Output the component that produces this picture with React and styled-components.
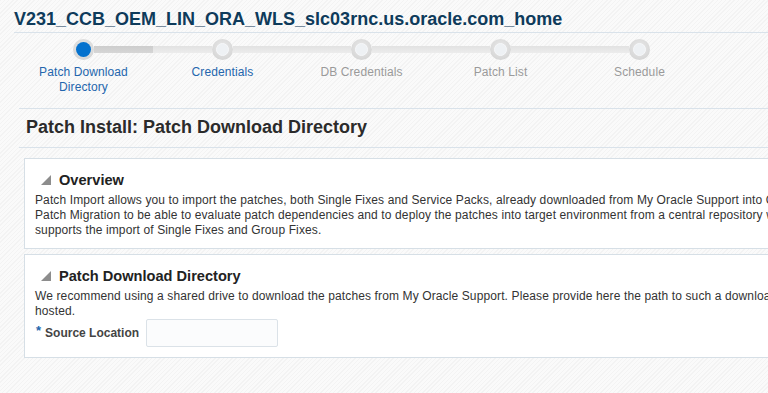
import React from 'react';
import styled, { createGlobalStyle } from 'styled-components';

const GlobalStyle = createGlobalStyle`
  html, body {
    margin: 0;
    padding: 0;
    overflow: hidden;
  }
  body {
    font-family: "Liberation Sans", Arial, sans-serif;
    background: repeating-linear-gradient(135deg, #f3f3f3 0 1px, #fafafa 1px 3px);
  }
`;

const steps = [
  { label: 'Patch Download Directory', state: 'current', lines: ['Patch Download', 'Directory'] },
  { label: 'Credentials', state: 'next', lines: ['Credentials'] },
  { label: 'DB Credentials', state: 'todo', lines: ['DB Credentials'] },
  { label: 'Patch List', state: 'todo', lines: ['Patch List'] },
  { label: 'Schedule', state: 'todo', lines: ['Schedule'] },
];

const App = () => {
  return (
    <Page>
      <GlobalStyle />
      <Header>
        <Title>V231_CCB_OEM_LIN_ORA_WLS_slc03rnc.us.oracle.com_home</Title>
      </Header>

      <Train>
        {steps.map((s, i) => (
          <Step key={s.label}>
            <Track>
              <Half $off={i === 0} />
              <Stop>
                <Dot $state={s.state} />
              </Stop>
              <Half $off={i === steps.length - 1} $dark={i === 0} />
            </Track>
            <StepLabel $state={s.state}>
              {s.lines.map(l => (
                <div key={l}>{l}</div>
              ))}
            </StepLabel>
          </Step>
        ))}
      </Train>

      <PageHeading>
        <h2>Patch Install: Patch Download Directory</h2>
      </PageHeading>

      <Panels>
        <Panel>
          <PanelHead>
            <Disclosure />
            <PanelTitle>Overview</PanelTitle>
          </PanelHead>
          <Body>
            <Line>Patch Import allows you to import the patches, both Single Fixes and Service Packs, already downloaded from My Oracle Support into Oracle Enterprise Manager Software Library so that</Line>
            <Line>Patch Migration to be able to evaluate patch dependencies and to deploy the patches into target environment from a central repository which</Line>
            <Line>supports the import of Single Fixes and Group Fixes.</Line>
          </Body>
        </Panel>

        <Panel>
          <PanelHead>
            <Disclosure />
            <PanelTitle>Patch Download Directory</PanelTitle>
          </PanelHead>
          <Body>
            <Line>We recommend using a shared drive to download the patches from My Oracle Support. Please provide here the path to such a download directory where the patches are</Line>
            <Line>hosted.</Line>
          </Body>
          <FieldRow>
            <Required>*</Required>
            <FieldLabel htmlFor="src">Source Location</FieldLabel>
            <TextInput id="src" type="text" />
          </FieldRow>
        </Panel>
      </Panels>
    </Page>
  );
};

export default App;

const Page = styled.div`
  width: 768px;
  height: 393px;
  overflow: hidden;
`;

const Header = styled.div`
  margin-left: 14px;
  border-bottom: 1px solid #d9e2ea;
  height: 32px;
`;

const Title = styled.h1`
  margin: 0;
  padding-top: 9px;
  font-size: 18px;
  line-height: 20px;
  font-weight: bold;
  color: #0e3b5b;
  white-space: nowrap;
`;

const Train = styled.div`
  display: flex;
  margin-left: 19px;
  height: 75px;
  border-bottom: 1px solid #d9e2ea;
  & > div:first-child {
    margin-left: -5px;
  }
`;

const Step = styled.div`
  width: 139px;
  display: flex;
  flex-direction: column;
  align-items: stretch;
`;

const Track = styled.div`
  display: flex;
  align-items: center;
  margin-top: 6px;
  height: 21px;
`;

const Half = styled.div`
  flex: 1;
  height: 7px;
  visibility: ${p => (p.$off ? 'hidden' : 'visible')};
  background: ${p => (p.$dark
    ? 'linear-gradient(#cdcdcd, #d6d6d6)'
    : 'linear-gradient(#e2e2e2, #ececec)')};
`;

const Stop = styled.div`
  width: 21px;
  height: 21px;
  border-radius: 50%;
  background: radial-gradient(circle at 50% 40%, #e9e9e9 0%, #dadada 60%, #cfcfcf 100%);
  display: flex;
  align-items: center;
  justify-content: center;
  flex-shrink: 0;
`;

const Dot = styled.div`
  width: ${p => (p.$state === 'current' ? '15px' : '13px')};
  height: ${p => (p.$state === 'current' ? '15px' : '13px')};
  border-radius: 50%;
  box-sizing: border-box;
  background: ${p => (p.$state === 'current' ? '#0572ce' : '#eef1f4')};
  border: ${p => (p.$state === 'current' ? 'none' : '1px solid #f7f8fa')};
`;

const StepLabel = styled.div`
  margin-top: 5px;
  text-align: center;
  font-size: 12px;
  line-height: 15px;
  letter-spacing: 0.1px;
  color: ${p => (p.$state === 'todo' ? '#9a9a9a' : '#2466ad')};
`;

const PageHeading = styled.div`
  margin-left: 19px;
  height: 38px;
  border-bottom: 1px solid #d9e2ea;
  display: flex;
  align-items: center;

  h2 {
    margin: -2px 0 0 7px;
    font-size: 18px;
    font-weight: bold;
    color: #2b2b2b;
  }
`;

const Panels = styled.div`
  display: flex;
  flex-direction: column;
  gap: 5px;
  margin: 10px 0 0 24px;
  width: 1000px;
`;

const Panel = styled.div`
  background: #ffffff;
  border: 1px solid #d6dfe6;
  padding: 11px 10px 10px 10px;
`;

const PanelHead = styled.div`
  display: flex;
  align-items: center;
  gap: 7px;
  padding-left: 6px;
  height: 20px;
`;

const Disclosure = styled.span`
  width: 0;
  height: 0;
  border-left: 10px solid transparent;
  border-bottom: 10px solid #8d8d8d;
`;

const PanelTitle = styled.h3`
  margin: 0 0 0 1px;
  font-size: 14.6px;
  font-weight: bold;
  color: #222;
`;

const Body = styled.div`
  margin-top: 3px;
  font-size: 12px;
  line-height: 15px;
  letter-spacing: 0.12px;
  color: #333;
`;

const Line = styled.div`
  white-space: nowrap;
`;

const FieldRow = styled.div`
  display: flex;
  align-items: center;
  margin-top: 0;
  padding-left: 1px;
`;

const Required = styled.span`
  color: #2466ad;
  font-size: 13px;
  font-weight: bold;
  margin-right: 4px;
  align-self: flex-start;
  margin-top: 4px;
`;

const FieldLabel = styled.label`
  font-size: 12px;
  font-weight: bold;
  color: #444;
  margin-right: 7px;
`;

const TextInput = styled.input`
  width: 132px;
  height: 28px;
  box-sizing: border-box;
  border: 1px solid #dbe2e8;
  border-radius: 2px;
  background: #fbfcfd;
  outline: none;
`;
